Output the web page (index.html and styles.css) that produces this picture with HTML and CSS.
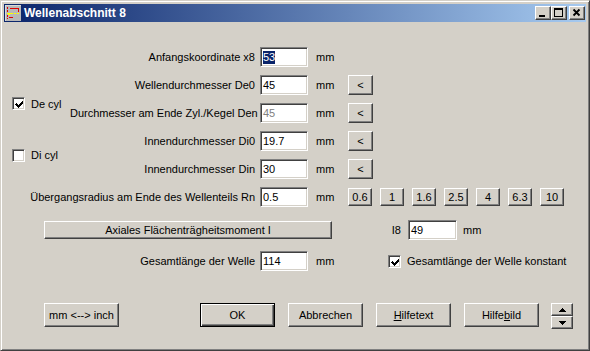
FILE: index.html
```html
<!DOCTYPE html>
<html lang="de">
<head>
<meta charset="utf-8">
<title>Wellenabschnitt 8</title>
<link rel="stylesheet" href="styles.css">
</head>
<body>
<div class="window">
  <div class="titlebar">
    <svg class="app-icon" width="16" height="16" viewBox="0 0 16 16" shape-rendering="crispEdges">
      <rect x="0" y="0" width="16" height="16" fill="#b8b8b8"/>
      <rect x="0" y="0" width="16" height="1" fill="#d8d8d8"/>
      <rect x="0" y="0" width="1" height="16" fill="#d8d8d8"/>
      <rect x="2" y="2" width="1" height="2" fill="#e00000"/>
      <rect x="2" y="5" width="1" height="2" fill="#e00000"/>
      <rect x="2" y="10" width="1" height="2" fill="#e00000"/>
      <rect x="2" y="13" width="1" height="1" fill="#e00000"/>
      <rect x="5" y="3" width="9" height="1" fill="#e00000"/>
      <rect x="13" y="3" width="1" height="4" fill="#e00000"/>
      <rect x="2" y="8" width="6" height="1" fill="#ffff00"/>
      <rect x="9" y="8" width="2" height="1" fill="#ffff00"/>
      <rect x="12" y="8" width="2" height="1" fill="#ffff00"/>
      <rect x="3" y="9" width="2" height="1" fill="#ffff00"/>
      <rect x="4" y="12" width="4" height="1" fill="#e00000"/>
    </svg>
    <span class="title">Wellenabschnitt 8</span>
    <div class="caption-btns">
      <div class="cap-btn">
        <svg width="14" height="12" viewBox="0 0 14 12" shape-rendering="crispEdges"><rect x="3" y="8" width="6" height="2" fill="#000"/></svg>
      </div>
      <div class="cap-btn">
        <svg width="14" height="12" viewBox="0 0 14 12" shape-rendering="crispEdges"><rect x="2.5" y="1.5" width="8" height="8" fill="none" stroke="#000"/><rect x="2" y="1" width="9" height="2" fill="#000"/></svg>
      </div>
      <div class="cap-btn close">
        <svg width="14" height="12" viewBox="0 0 14 12"><path d="M3.5 2.5 L9.5 8.5 M9.5 2.5 L3.5 8.5" stroke="#000" stroke-width="1.8" fill="none"/></svg>
      </div>
    </div>
  </div>

  <div class="client">
    <div class="form-grid">
      <div class="lbl">Anfangskoordinate x8</div>
      <div class="field"><span class="sel">53</span></div>
      <div class="unit">mm</div>

      <div class="check-item cyl-de">
        <div class="checkbox"><svg width="9" height="9" viewBox="0 0 9 9" shape-rendering="crispEdges"><path d="M1 3h1v1h1v1h1v-1h1v-1h1v-1h1v-1h1v3h-1v1h-1v1h-1v1h-1v1h-1v-1h-1v-1h-1v-1h-1z" fill="#000"/></svg></div>
        <span>De cyl</span>
      </div>

      <div class="lbl">Wellendurchmesser De0</div>
      <div class="field">45</div>
      <div class="unit">mm</div>
      <div class="btn arrow-btn">&lt;</div>

      <div class="lbl">Durchmesser am Ende Zyl./Kegel Den</div>
      <div class="field disabled">45</div>
      <div class="unit">mm</div>
      <div class="btn arrow-btn">&lt;</div>

      <div class="check-item cyl-di">
        <div class="checkbox"></div>
        <span>Di cyl</span>
      </div>

      <div class="lbl">Innendurchmesser Di0</div>
      <div class="field">19.7</div>
      <div class="unit">mm</div>
      <div class="btn arrow-btn">&lt;</div>

      <div class="lbl">Innendurchmesser Din</div>
      <div class="field">30</div>
      <div class="unit">mm</div>
      <div class="btn arrow-btn">&lt;</div>

      <div class="lbl lbl-wide">Übergangsradius am Ende des Wellenteils Rn</div>
      <div class="field">0.5</div>
      <div class="unit">mm</div>
      <div class="radius-btns">
        <div class="btn num-btn">0.6</div>
        <div class="btn num-btn">1</div>
        <div class="btn num-btn">1.6</div>
        <div class="btn num-btn">2.5</div>
        <div class="btn num-btn">4</div>
        <div class="btn num-btn">6.3</div>
        <div class="btn num-btn">10</div>
      </div>
    </div>

    <div class="row-moment">
      <div class="btn moment-btn">Axiales Flächenträgheitsmoment I</div>
      <div class="lbl-i8">I8</div>
      <div class="field field-i8">49</div>
      <div class="unit-short">mm</div>
    </div>

    <div class="row-length">
      <div class="lbl-length">Gesamtlänge der Welle</div>
      <div class="field">114</div>
      <div class="unit-long">mm</div>
      <div class="check-item">
        <div class="checkbox"><svg width="9" height="9" viewBox="0 0 9 9" shape-rendering="crispEdges"><path d="M1 3h1v1h1v1h1v-1h1v-1h1v-1h1v-1h1v3h-1v1h-1v1h-1v1h-1v1h-1v-1h-1v-1h-1v-1h-1z" fill="#000"/></svg></div>
        <span>Gesamtlänge der Welle konstant</span>
      </div>
    </div>

    <div class="bottom-row">
      <div class="btn push-btn">mm &lt;--&gt; inch</div>
      <div class="btn push-btn default-btn">OK</div>
      <div class="btn push-btn">Abbrechen</div>
      <div class="btn push-btn"><u>H</u>ilfetext</div>
      <div class="btn push-btn">Hilfe<u>b</u>ild</div>
      <div class="spin">
        <div class="btn spin-btn"><svg width="7" height="4" viewBox="0 0 7 4" shape-rendering="crispEdges"><path d="M3 0h1v1h1v1h1v1h1v1h-7v-1h1v-1h1v-1h1z" fill="#000"/></svg></div>
        <div class="btn spin-btn"><svg width="7" height="4" viewBox="0 0 7 4" shape-rendering="crispEdges"><path d="M0 0h7v1h-1v1h-1v1h-1v1h-1v-1h-1v-1h-1v-1h-1z" fill="#000"/></svg></div>
      </div>
    </div>
  </div>
</div>
</body>
</html>
```

FILE: styles.css
```css
* { box-sizing: border-box; }

html, body {
  margin: 0;
  padding: 0;
  background: #d4d0c8;
}

body {
  font-family: "Liberation Sans", Arial, sans-serif;
  font-size: 11px;
  color: #000;
}

.window {
  width: 590px;
  height: 351px;
  background: #d4d0c8;
  border: 1px solid;
  border-color: #d4d0c8 #404040 #404040 #d4d0c8;
  box-shadow: inset 1px 1px #ffffff, inset -1px -1px #808080;
  padding: 3px;
  display: flex;
  flex-direction: column;
}

/* ---------- title bar ---------- */
.titlebar {
  height: 18px;
  flex: none;
  display: flex;
  align-items: center;
  background: linear-gradient(to right, #0a246a, #a6caf0);
  color: #fff;
  padding: 0 1px 0 1px;
}

.app-icon {
  flex: none;
  margin-right: 3px;
}

.title {
  flex: 1;
  font-weight: bold;
  font-size: 12px;
  white-space: nowrap;
}

.caption-btns {
  display: flex;
}

.cap-btn {
  width: 16px;
  height: 14px;
  background: #d4d0c8;
  border: 1px solid;
  border-color: #ffffff #404040 #404040 #ffffff;
  box-shadow: inset -1px -1px #808080;
  display: flex;
}

.cap-btn svg { display: block; }

.cap-btn.close { margin-left: 2px; }

/* ---------- common controls ---------- */
.btn {
  background: #d4d0c8;
  border: 1px solid;
  border-color: #ffffff #404040 #404040 #ffffff;
  box-shadow: inset -1px -1px #808080;
  display: flex;
  align-items: center;
  justify-content: center;
  white-space: nowrap;
}

.field {
  width: 48px;
  height: 20px;
  background: #fff;
  border: 1px solid;
  border-color: #808080 #ffffff #ffffff #808080;
  box-shadow: inset 1px 1px #404040, inset -1px -1px #d4d0c8;
  padding-left: 2px;
  display: flex;
  align-items: center;
  white-space: nowrap;
}

.field.disabled { color: #808080; }

.sel {
  background: #0a246a;
  color: #fff;
  line-height: 13px;
}

.checkbox {
  width: 13px;
  height: 13px;
  flex: none;
  background: #fff;
  border: 1px solid;
  border-color: #808080 #ffffff #ffffff #808080;
  box-shadow: inset 1px 1px #404040, inset -1px -1px #d4d0c8;
  padding: 2px;
}

.checkbox svg { display: block; }

.check-item {
  display: flex;
  align-items: center;
  gap: 6px;
  white-space: nowrap;
}

/* ---------- client area ---------- */
.client {
  flex: 1;
  display: flex;
  flex-direction: column;
}

.form-grid {
  display: grid;
  grid-template-columns: 58px 190px 48px 40px auto;
  grid-auto-rows: 20px;
  row-gap: 8px;
  align-items: center;
  margin: 25px 0 0 8px;
}

.lbl {
  grid-column: 2;
  text-align: right;
  padding-right: 5px;
  white-space: nowrap;
}

.lbl-wide { grid-column: 1 / 3; }

.form-grid .field { grid-column: 3; }

.unit {
  grid-column: 4;
  padding-left: 8px;
}

.arrow-btn {
  grid-column: 5;
  width: 25px;
  height: 20px;
}

.check-item.cyl-de,
.check-item.cyl-di {
  grid-column: 1;
  grid-row: span 2;
}

.cyl-de { margin-top: 9px; }

.radius-btns {
  grid-column: 5;
  display: flex;
  gap: 8px;
}

.num-btn {
  width: 24px;
  height: 18px;
}

/* moment row */
.row-moment {
  display: flex;
  align-items: center;
  height: 20px;
  margin-top: 13px;
  padding-left: 40px;
}

.moment-btn {
  width: 288px;
  height: 18px;
}

.lbl-i8 {
  width: 76px;
  text-align: right;
  padding-right: 7px;
}

.field-i8 { width: 49px; }

.unit-short { padding-left: 6px; }

/* length row */
.row-length {
  display: flex;
  align-items: center;
  height: 20px;
  margin-top: 11px;
}

.lbl-length {
  width: 256px;
  text-align: right;
  padding-right: 5px;
  white-space: nowrap;
}

.unit-long {
  width: 80px;
  padding-left: 8px;
}

/* bottom row */
.bottom-row {
  display: flex;
  align-items: flex-start;
  gap: 13px;
  margin-top: 32px;
  padding-left: 40px;
}

.push-btn {
  width: 75px;
  height: 24px;
}

.default-btn {
  margin-left: 68px;
  border-color: #000;
  box-shadow: inset 1px 1px #ffffff, inset -1px -1px #404040, inset -2px -2px #808080;
}

.spin {
  width: 22px;
  height: 26px;
  margin-left: -1px;
  display: flex;
  flex-direction: column;
}

.spin-btn {
  width: 22px;
  height: 13px;
}

.spin-btn svg { display: block; }
```
